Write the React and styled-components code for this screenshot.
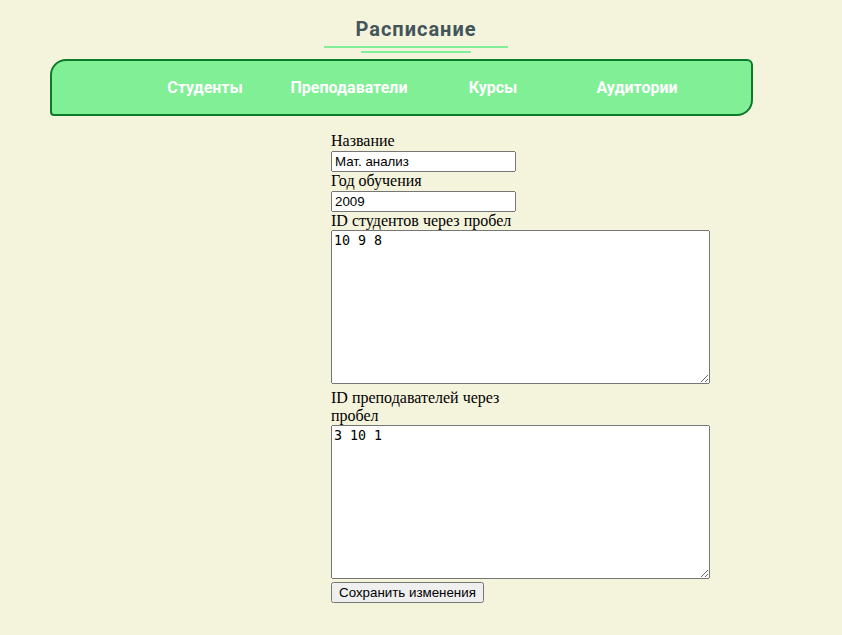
import React from "react";
import styled, { createGlobalStyle } from "styled-components";

const Global = createGlobalStyle`
  body {
    margin: 0;
    background: #f4f3dc;
    font-family: "Liberation Serif", serif;
  }
`;

const Header = styled.header`
  display: flex;
  flex-direction: column;
  align-items: center;
  padding: 16px 10px 0 0;
`;

const Title = styled.h1`
  margin: 0;
  font-family: Roboto, sans-serif;
  font-size: 20px;
  font-weight: 700;
  letter-spacing: 1px;
  color: #44555a;
  line-height: 26px;
`;

const Line = styled.div`
  width: ${(p) => p.w}px;
  height: 2px;
  background: #80ef97;
  margin-top: ${(p) => p.top}px;
`;

const Nav = styled.nav`
  margin: 6px 0 0 50px;
  width: 703px;
  height: 57px;
  box-sizing: border-box;
  background: #80ef96;
  border: 2px solid #0b7a2b;
  border-radius: 16px 6px 16px 4px;
  display: grid;
  grid-template-columns: repeat(4, 144px);
  align-items: center;
  padding-left: 81px;
`;

const NavLink = styled.a`
  text-align: center;
  font-family: Roboto, sans-serif;
  font-weight: 700;
  font-size: 16px;
  color: #fff;
  text-decoration: none;
  cursor: pointer;
`;

const Form = styled.form`
  width: 185px;
  margin: 16px 0 0 331px;
  display: flex;
  flex-direction: column;
  align-items: flex-start;
`;

const Label = styled.label`
  font-size: 16px;
  line-height: 18px;
  color: #000;
  margin-top: ${(p) => p.gap || 0}px;
`;

const Input = styled.input`
  width: 185px;
  height: 21px;
  box-sizing: border-box;
  font-family: "Liberation Sans", sans-serif;
  font-size: 13.33px;
  margin: 1px 0 0;
`;

const Area = styled.textarea`
  width: 379px;
  height: 154px;
  box-sizing: border-box;
  font-family: "DejaVu Sans Mono", monospace;
  font-size: 13.33px;
  margin: 0;
  flex-shrink: 0;
`;

const Button = styled.button`
  margin-top: 3px;
  height: 21px;
  font-family: "Liberation Sans", sans-serif;
  font-size: 13.33px;
  padding: 1px 6px;
`;

export default function App() {
  return (
    <>
      <Global />
      <Header>
        <Title>Расписание</Title>
        <Line w={184} top={4} />
        <Line w={110} top={3} />
      </Header>
      <Nav>
        <NavLink>Студенты</NavLink>
        <NavLink>Преподаватели</NavLink>
        <NavLink>Курсы</NavLink>
        <NavLink>Аудитории</NavLink>
      </Nav>
      <Form onSubmit={(e) => e.preventDefault()}>
        <Label>Название</Label>
        <Input defaultValue="Мат. анализ" />
        <Label>Год обучения</Label>
        <Input defaultValue="2009" />
        <Label>ID студентов через пробел</Label>
        <Area defaultValue="10 9 8" />
        <Label gap={5}>ID преподавателей через пробел</Label>
        <Area defaultValue="3 10 1" />
        <Button type="submit">Сохранить изменения</Button>
      </Form>
    </>
  );
}
